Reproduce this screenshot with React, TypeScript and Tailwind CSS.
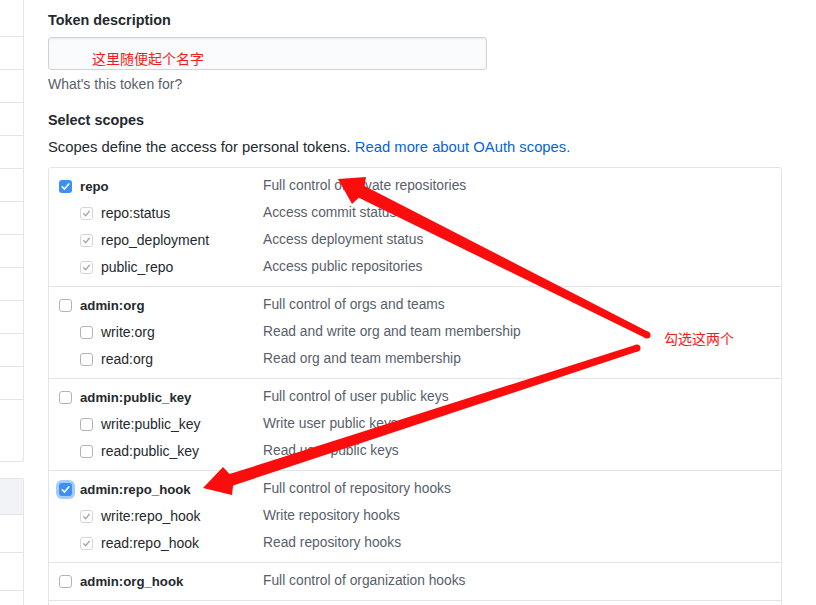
import React from 'react'

type SubScope = { name: string; desc: string; checked?: boolean }
type Scope = { name: string; desc: string; checked?: boolean; focus?: boolean; children: SubScope[] }

const scopes: Scope[] = [
  {
    name: 'repo',
    desc: 'Full control of private repositories',
    checked: true,
    children: [
      { name: 'repo:status', desc: 'Access commit status', checked: true },
      { name: 'repo_deployment', desc: 'Access deployment status', checked: true },
      { name: 'public_repo', desc: 'Access public repositories', checked: true },
    ],
  },
  {
    name: 'admin:org',
    desc: 'Full control of orgs and teams',
    children: [
      { name: 'write:org', desc: 'Read and write org and team membership' },
      { name: 'read:org', desc: 'Read org and team membership' },
    ],
  },
  {
    name: 'admin:public_key',
    desc: 'Full control of user public keys',
    children: [
      { name: 'write:public_key', desc: 'Write user public keys' },
      { name: 'read:public_key', desc: 'Read user public keys' },
    ],
  },
  {
    name: 'admin:repo_hook',
    desc: 'Full control of repository hooks',
    checked: true,
    focus: true,
    children: [
      { name: 'write:repo_hook', desc: 'Write repository hooks', checked: true },
      { name: 'read:repo_hook', desc: 'Read repository hooks', checked: true },
    ],
  },
  {
    name: 'admin:org_hook',
    desc: 'Full control of organization hooks',
    children: [],
  },
]

function Check({ color }: { color: string }) {
  return (
    <svg viewBox="0 0 13 13" className="w-[13px] h-[13px]">
      <path d="M3.2 6.8 L5.5 9.1 L9.8 3.9" fill="none" stroke={color} strokeWidth="1.6" strokeLinecap="round" strokeLinejoin="round" />
    </svg>
  )
}

function Box({ checked, sub, focus }: { checked?: boolean; sub?: boolean; focus?: boolean }) {
  if (checked && !sub) {
    return (
      <span
        className={
          'w-[13px] h-[13px] rounded-[3px] bg-[#3b8ff5] flex items-center justify-center shrink-0 ' +
          (focus ? 'shadow-[0_0_0_3px_rgba(90,160,250,0.55)]' : '')
        }
      >
        <Check color="#ffffff" />
      </span>
    )
  }
  if (checked) {
    return (
      <span className="w-[13px] h-[13px] rounded-[3px] border border-[#d6d6d6] bg-white flex items-center justify-center shrink-0">
        <Check color="#a8a8a8" />
      </span>
    )
  }
  return <span className="w-[13px] h-[13px] rounded-[3px] border border-[#b4b4b4] bg-white shrink-0" />
}

function Row({ name, desc, checked, sub, focus }: SubScope & { sub?: boolean; focus?: boolean }) {
  return (
    <div className="h-[27px] flex items-center">
      <div className={'w-[204px] flex items-center gap-[8px] ' + (sub ? 'pl-[21px]' : '')}>
        <Box checked={checked} sub={sub} focus={focus} />
        <span className={sub ? 'text-[#24292e]' : 'font-bold text-[13.2px] text-[#24292e]'}>{name}</span>
      </div>
      <span className="text-[13.8px] text-[#586069]">{desc}</span>
    </div>
  )
}

// left settings nav, only its right edge is visible
const navRows = [37, 33, 33, 33, 33, 33, 33, 33, 33, 33, 33, 33, 33]

export default function App() {
  return (
    <div className="relative h-[605px] overflow-hidden bg-white flex font-['Liberation_Sans','Noto_Sans_CJK_SC',Arial,sans-serif] text-[14px] text-[#24292e]">
      <div className="w-[24px] shrink-0">
        <div className="border-r border-b border-[#e1e4e8] rounded-br-[3px]">
          {navRows.map((h, i) => (
            <div
              key={i}
              style={{ height: h }}
              className={i < navRows.length - 1 ? 'border-b border-[#e1e4e8]' : ''}
            />
          ))}
          <div className="h-[28px]" />
        </div>
        <div className="mt-[16px] border-r border-t border-[#e1e4e8] rounded-tr-[3px]">
          <div className="h-[36px] bg-[#f1f3f6] border-b border-[#e1e4e8]" />
          <div className="h-[38px] border-b border-[#e1e4e8]" />
          <div className="h-[38px] border-b border-[#e1e4e8]" />
          <div className="h-[38px]" />
        </div>
      </div>

      <div className="ml-[24px] w-[734px] pt-[10px]">
        <div className="font-bold text-[14.4px] leading-[21px]">Token description</div>
        <div className="mt-[6px] w-[439px] h-[33px] rounded-[3px] border border-[#d1d5da] bg-[#fafbfc] shadow-[inset_0_1px_2px_rgba(27,31,35,0.075)]" />
        <div className="mt-[4px] leading-[21px] text-[#586069]">What's this token for?</div>

        <div className="mt-[15px] font-bold text-[14.4px] leading-[21px]">Select scopes</div>
        <div className="mt-[6px] text-[14.8px] leading-[21px]">
          Scopes define the access for personal tokens.{' '}
          <span className="text-[#0366d6]">Read more about OAuth scopes.</span>
        </div>

        <div className="mt-[9px] border border-[#e1e4e8] rounded-[3px]">
          {scopes.map((s, i) => (
            <div key={s.name} className={'px-[10px] py-[5px] ' + (i > 0 ? 'border-t border-[#e1e4e8]' : '')}>
              <Row name={s.name} desc={s.desc} checked={s.checked} focus={s.focus} />
              {s.children.map((c) => (
                <Row key={c.name} {...c} sub />
              ))}
            </div>
          ))}
          <div className="h-[40px] border-t border-[#e1e4e8]" />
        </div>
      </div>

      {/* annotations drawn on top */}
      <span className="absolute left-[92px] top-[50px] text-[14px] leading-[18px] text-[#f51a1a]">这里随便起个名字</span>
      <span className="absolute left-[664px] top-[330px] text-[14px] leading-[18px] text-[#f51a1a]">勾选这两个</span>

      <svg className="absolute inset-0 pointer-events-none" width="816" height="605" viewBox="0 0 816 605">
        <polygon
          points="338,179 366,177 364.6,186.1 648.6,331.9 645.4,338.1 358.8,197.7 352,204"
          fill="#fb0d0d"
        />
        <circle cx="647" cy="335" r="3.5" fill="#fb0d0d" />
        <polygon
          points="203,488 223,467 229.5,474.1 635.9,344.7 638.1,351.3 233.1,485.5 232,495"
          fill="#fb0d0d"
        />
        <circle cx="637" cy="348" r="3.5" fill="#fb0d0d" />
      </svg>
    </div>
  )
}
